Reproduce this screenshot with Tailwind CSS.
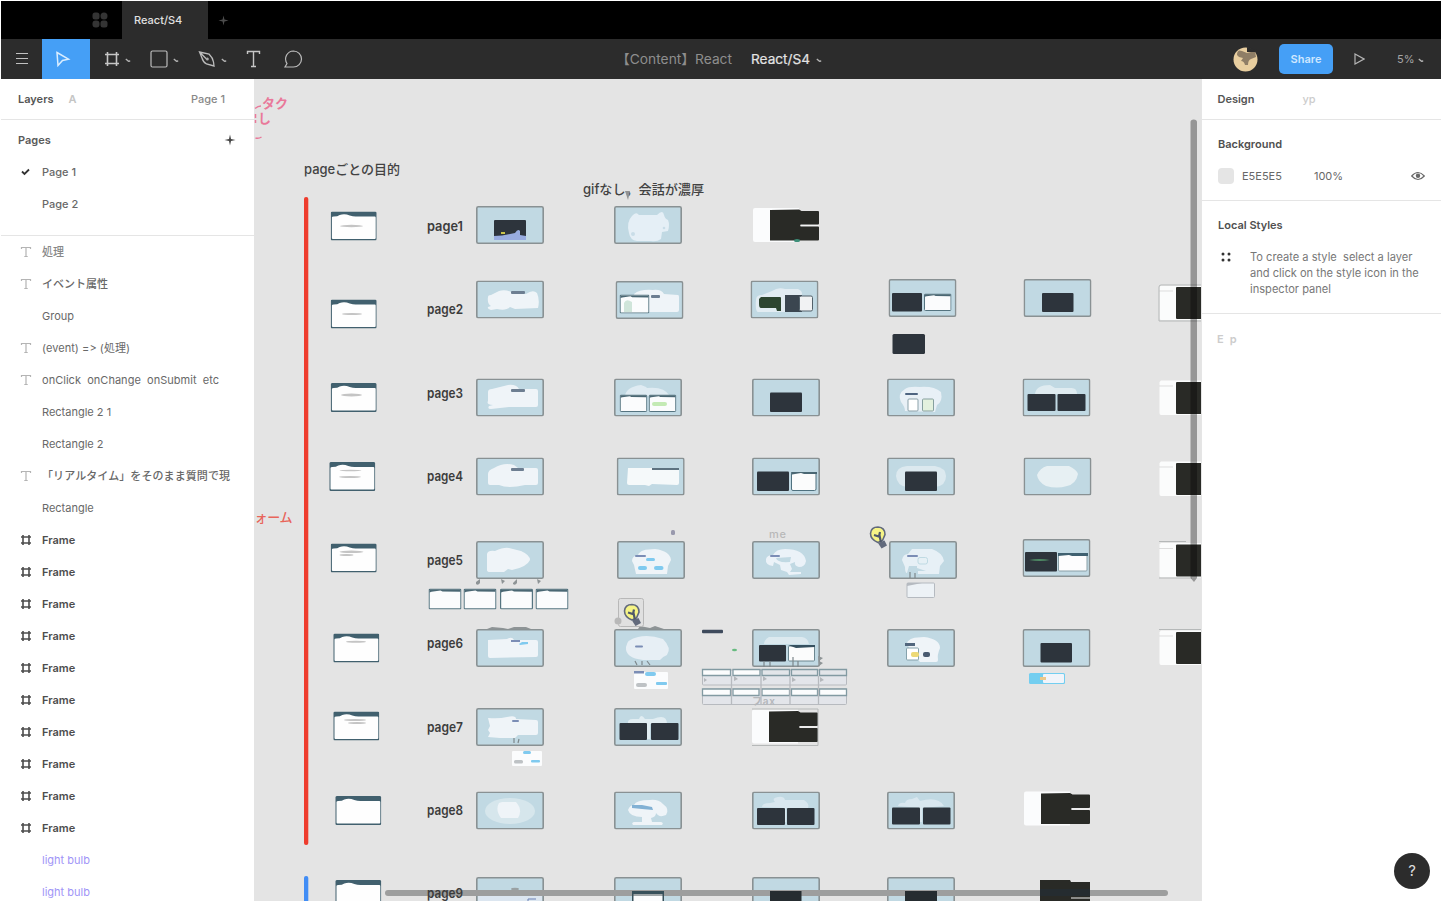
<!DOCTYPE html>
<html lang="ja">
<head>
<meta charset="utf-8">
<title>React/S4</title>
<script src="https://cdn.jsdelivr.net/npm/@tailwindcss/browser@4"></script>
</head>
<body class="h-[901px] w-[1441px] overflow-hidden bg-white pt-px pl-px font-['Inter','Noto_Sans_CJK_JP',sans-serif] text-[11px] text-[#686868] [font-feature-settings:'calt'_0]">
<svg class="hidden">
  <symbol id="hash" viewBox="0 0 12 12"><path d="M3 1v10M9 1v10M1 3h10M1 9h10" fill="none" stroke="currentColor" stroke-width="1.600"/></symbol>
  <symbol id="tee" viewBox="0 0 12 12"><path d="M1.500 3V1.500h9V3M6 1.500v9M4.300 10.500h3.400" fill="none" stroke="#b4b4b4" stroke-width="1.200"/></symbol>
  <symbol id="chev" viewBox="0 0 6 6"><path d="M.8 1 3.500 3.200 5.200 3" fill="none" stroke="#b5b5b5" stroke-width="1.300"/></symbol>
  <symbol id="plus" viewBox="0 0 12 12"><path d="M6 .5 7 5 11.500 6 7 7 6 11.500 5 7 .5 6 5 5Z" fill="currentColor"/></symbol>
  <symbol id="fr" viewBox="0 0 68 38"><rect x=".8" y=".8" width="66.400" height="36.400" rx="1.500" fill="#c1d9e3" stroke="#899193" stroke-width="1.600"/></symbol>
  <symbol id="wf" viewBox="0 0 46 29"><rect width="46" height="29" rx="1.500" fill="#41606e"/><path d="M1.200 6Q1.200 5 3 5 7 5 9 3.500 14 2 19 4 22 5 25 5H44q1 0 1 1V26.500q0 1-1 1H2.200q-1 0-1-1Z" fill="#fefefe"/></symbol>
  <symbol id="mini" viewBox="0 0 33 21"><rect x=".6" y=".6" width="31.800" height="19.800" rx="1" fill="#fbfcfd" stroke="#557480" stroke-width="1.200"/><path d="M1 1H32V3.300L14 3 12 2 3 3.300 1 4Z" fill="#4a6773"/></symbol>
  <symbol id="code" viewBox="0 0 67 36"><path d="M2 1H46V35H2Q0 35 0 33V3Q0 1 2 1Z" fill="#fbfcfd"/><path d="M17 3 46 2.500 48.500 4H65Q66 4 66 5V16.500Q66 17.500 65 17.500H47.500V19.500H65Q66 19.500 66 20.500V32.500Q66 33.500 65 33.500H17Z" fill="#292a26"/><path d="M47.500 18.500H66" stroke="#f4f4f4"/></symbol>
  <symbol id="side" viewBox="0 0 42 36"><path d="M2 .5H42V35H2Q.5 35 .5 33V2Z" fill="#fbfcfc"/><path d="M0 6H14" stroke="#ddd"/><rect x="17" y="2" width="26" height="32" rx="1" fill="#292a26"/></symbol>
  <symbol id="bulb" viewBox="0 0 20 25"><path d="M1.500 8Q2 1.500 9 1.500 16 2 16 9L13.500 15 9 17Q1.500 14 1.500 8Z" fill="#f6f486" stroke="#626a7c" stroke-width="1.600"/><path d="M5 9.500 10 11 11 6.500M10.500 10 12 17" fill="none" stroke="#50596a" stroke-width="2.200"/><path d="M9 17.500 15.500 15 18 20 12.500 23Z" fill="#626a7c"/></symbol>
</svg>
<div class="flex h-[900px] w-[1440px] flex-col">
  <header class="flex h-[38px] shrink-0 bg-black">
    <div class="flex w-[121px] items-center justify-end pr-[14px]">
      <svg class="size-4" viewBox="0 0 16 16" fill="#343434"><rect x=".5" y=".5" width="7" height="7" rx="2.500"/><rect x="8.500" y=".5" width="7" height="7" rx="3.500"/><rect x=".5" y="8.500" width="7" height="7" rx="3"/><rect x="8.500" y="8.500" width="7" height="7" rx="2.500"/></svg>
    </div>
    <div class="flex w-[86px] items-center bg-[#2c2c2c] pl-3 text-[11px] font-medium text-[#e0e0e0]">React/S4</div>
    <div class="flex items-center pl-[10px] text-[#4c4c4c]"><svg class="size-[11px]"><use href="#plus"/></svg></div>
  </header>
  <nav class="flex h-10 shrink-0 items-center bg-[#2c2c2c]">
    <div class="flex w-[41px] justify-center"><svg class="h-3 w-[14px]" viewBox="0 0 14 12"><path d="M1 .500H13M1 5.500H13M1 10.500H13" stroke="#c0c0c0"/></svg></div>
    <div class="flex h-10 w-12 items-center bg-[#459ff6] pl-[13px]"><svg class="h-4 w-4" viewBox="0 0 16 16"><path d="M2 1.500 13.500 8.200 7.500 9.500 3 14.500Z" fill="none" stroke="#d9edff" stroke-width="1.500"/></svg></div>
    <div class="flex w-12 items-center gap-1 pl-[14px]"><svg class="size-4" viewBox="0 0 16 16"><path d="M3.500 1v14M12.500 1v14M1 3.500h14M1 12.500h14" fill="none" stroke="#c6c6c6" stroke-width="1.600"/></svg><svg class="mt-[3px] ml-px size-[6px]"><use href="#chev"/></svg></div>
    <div class="flex w-12 items-center gap-1 pl-3"><svg class="h-[18px] w-[18px]" viewBox="0 0 18 18"><rect x="1" y="1" width="16" height="16" rx="1.500" fill="none" stroke="#bcbcbc" stroke-width="1.200"/></svg><svg class="mt-[3px] ml-px size-[6px]"><use href="#chev"/></svg></div>
    <div class="flex w-12 items-center gap-1 pl-3"><svg class="h-[18px] w-[18px]" viewBox="0 0 18 18"><path d="M1.500 2 11 4 Q15 8 15.500 12L16 16 8.500 14Q5 12 4 8ZM1.500 2 8.500 9" fill="none" stroke="#bcbcbc" stroke-width="1.300"/><circle cx="9.300" cy="9" r="1.500" fill="#aaa"/></svg><svg class="mt-[3px] ml-px size-[6px]"><use href="#chev"/></svg></div>
    <div class="flex w-10 pl-3"><svg class="h-[18px] w-[15px]" viewBox="0 0 15 18"><path d="M1.500 4V1.500H13.500V4M7.500 1.500V16.500M5 16.500H10" fill="none" stroke="#c6c6c6" stroke-width="1.400"/></svg></div>
    <div class="flex w-10 pl-[9px]"><svg class="h-[18px] w-5" viewBox="0 0 20 18"><path d="M10.500 1A8 8 0 1 1 10.500 17H2L4 13.500A8 8 0 0 1 10.500 1Z" fill="none" stroke="#bcbcbc" stroke-width="1.200"/></svg></div>
    <div class="flex flex-1 items-center pl-[301px] text-[13px] whitespace-nowrap"><svg class="h-[14px] w-[122px] overflow-visible" viewBox="0 0 122 14"><text x="1" y="12" textLength="116" lengthAdjust="spacingAndGlyphs" fill="#8e8e8e">【Content】React</text></svg><svg class="ml-[14px] h-[14px] w-[65px] overflow-visible" viewBox="0 0 65 14"><text x="0" y="12" textLength="59" lengthAdjust="spacingAndGlyphs" fill="#e3e3e3" stroke="#e3e3e3" stroke-width=".2">React/S4</text></svg><svg class="mt-[3px] size-[6px]"><use href="#chev"/></svg></div>
    <div class="flex w-[208px] items-center">
      <svg class="size-[25px] shrink-0" viewBox="0 0 25 25"><circle cx="12.500" cy="12.500" r="12" fill="#e8ce9f"/><path d="M4 8Q4 2 9 4L14 6 22 4 23 10 18 12Q15 13 15 18H12Q11 14 8 14L10 11 6 10Z" fill="#8f7e66"/><path d="M14 0 24 3 22 5 14 5Z" fill="#2c2c2c"/></svg>
      <div class="ml-[21px] flex h-[30px] w-[54px] items-center justify-center rounded-[5px] bg-[#459ff6] font-semibold text-[#cfe7ff]">Share</div>
      <svg class="ml-[21px] h-3 w-[11px]" viewBox="0 0 11 12"><path d="M1 1 10 6 1 11Z" fill="none" stroke="#b5b5b5" stroke-width="1.200"/></svg>
      <span class="ml-8 text-[#a5a5a5]">5%</span><svg class="mt-[3px] ml-[3px] size-[6px]"><use href="#chev"/></svg>
    </div>
  </nav>
  <div class="flex h-[822px] shrink-0">
    <aside class="flex w-[253px] shrink-0 flex-col overflow-hidden bg-white">
      <div class="flex h-[41px] shrink-0 items-center border-b border-[#e5e5e5] pl-[17px]"><span class="font-semibold text-[#555]">Layers</span><span class="ml-[15px] font-semibold text-[#c5c5c5]">A</span><span class="ml-auto pr-[29px] font-medium text-[#888]">Page 1</span></div>
      <div class="h-[116px] shrink-0 border-b border-[#e5e5e5]">
        <div class="flex h-9 items-center pt-1 pl-[17px] font-semibold text-[#5a5a5a]">Pages<svg class="mr-[18px] ml-auto size-3 text-[#444]"><use href="#plus"/></svg></div>
        <div class="flex h-8 items-center pl-5 font-medium"><svg class="mr-3 h-2 w-[9px]" viewBox="0 0 9 8"><path d="M1 3.500 3.500 6 8 1.500" fill="none" stroke="#333" stroke-width="1.800"/></svg>Page 1</div>
        <div class="flex h-8 items-center pl-[41px] font-medium">Page 2</div>
      </div>
      <div class="flex flex-col whitespace-nowrap *:flex *:h-8 *:shrink-0 *:items-center *:gap-[10px] *:pl-[19px]">
        <div class="font-medium text-[#888]"><svg class="size-3"><use href="#tee"/></svg>処理</div>
        <div class="font-medium"><svg class="size-3"><use href="#tee"/></svg>イベント属性</div>
        <div><i class="w-3"></i>Group</div>
        <div><svg class="size-3 shrink-0"><use href="#tee"/></svg><svg class="h-4 w-[90px] shrink-0" viewBox="0 0 90 16"><text y="12" textLength="88" lengthAdjust="spacing" fill="currentColor">(event) =&gt; (処理)</text></svg></div>
        <div><svg class="size-3"><use href="#tee"/></svg><svg class="h-4 w-[180px] shrink-0" viewBox="0 0 180 16"><text y="12" textLength="177" lengthAdjust="spacing" fill="currentColor">onClick&#160; onChange&#160; onSubmit&#160; etc</text></svg></div>
        <div><i class="w-3"></i>Rectangle 2 1</div>
        <div><i class="w-3"></i>Rectangle 2</div>
        <div><svg class="size-3"><use href="#tee"/></svg><svg class="h-4 w-[190px] shrink-0" viewBox="0 0 190 16"><text y="12" textLength="188" lengthAdjust="spacing" font-weight="500" fill="currentColor">「リアルタイム」をそのまま質問で現</text></svg></div>
        <div><i class="w-3"></i>Rectangle</div>
        <div class="font-semibold text-[#4d4d4d]"><svg class="size-3"><use href="#hash"/></svg>Frame</div>
        <div class="font-semibold text-[#4d4d4d]"><svg class="size-3"><use href="#hash"/></svg>Frame</div>
        <div class="font-semibold text-[#4d4d4d]"><svg class="size-3"><use href="#hash"/></svg>Frame</div>
        <div class="font-semibold text-[#4d4d4d]"><svg class="size-3"><use href="#hash"/></svg>Frame</div>
        <div class="font-semibold text-[#4d4d4d]"><svg class="size-3"><use href="#hash"/></svg>Frame</div>
        <div class="font-semibold text-[#4d4d4d]"><svg class="size-3"><use href="#hash"/></svg>Frame</div>
        <div class="font-semibold text-[#4d4d4d]"><svg class="size-3"><use href="#hash"/></svg>Frame</div>
        <div class="font-semibold text-[#4d4d4d]"><svg class="size-3"><use href="#hash"/></svg>Frame</div>
        <div class="font-semibold text-[#4d4d4d]"><svg class="size-3"><use href="#hash"/></svg>Frame</div>
        <div class="font-semibold text-[#4d4d4d]"><svg class="size-3"><use href="#hash"/></svg>Frame</div>
        <div class="text-[#9f95f7]"><i class="w-3"></i>light bulb</div>
        <div class="text-[#9f95f7]"><i class="w-3"></i>light bulb</div>
      </div>
    </aside>
    <main class="h-[822px] w-[947px] shrink-0 bg-[#e4e4e4]">
      <svg class="block h-[822px] w-[947px]" viewBox="254 79 947 822">
        <!-- section titles -->
        <g fill="#e9799a" font-size="13" font-weight="600"><text x="262" y="108" textLength="26" lengthAdjust="spacingAndGlyphs">タク</text><text x="258" y="123">し</text><path d="M255 108.500Q258 106 261 106" fill="none" stroke="#e9799a" stroke-width="1.500"/><path d="M255.500 114v4M255.500 120v3" stroke="#e9799a" stroke-width="1.500"/><path d="M255.500 138q3 1 6-1" fill="none" stroke="#e9799a" stroke-width="1.500"/></g>
        <text x="254.500" y="522" font-size="13" font-weight="500" textLength="38" fill="#e8655b">ォーム</text>
        <g fill="#424242" font-size="13" font-weight="500"><text x="304" y="174" textLength="96" lengthAdjust="spacingAndGlyphs">pageごとの目的</text><text x="583" y="194" textLength="121" lengthAdjust="spacingAndGlyphs">gifなし，会話が濃厚</text></g>
        <path d="M625 191h5l-2 9Z" fill="#929292"/>
        <rect x="304" y="197" width="4.300" height="648" rx="2" fill="#ee3c2d"/>
        <rect x="304" y="876" width="4.300" height="40" rx="2" fill="#418df5"/>
        <!-- purpose cards -->
        <g><use href="#wf" x="330.700" y="211.500" width="46" height="29"/><use href="#wf" x="330.700" y="299.500" width="46" height="29"/><use href="#wf" x="330.700" y="383" width="46" height="29"/><use href="#wf" x="329.300" y="462" width="46" height="29"/><use href="#wf" x="330.700" y="543.500" width="46" height="29"/><use href="#wf" x="333.300" y="633.500" width="46" height="29"/><use href="#wf" x="333.300" y="711.500" width="46" height="29"/><use href="#wf" x="335.300" y="796" width="46" height="29"/><use href="#wf" x="335.300" y="880" width="46" height="29"/></g>
        <g fill="#c4c4c4"><ellipse cx="351.500" cy="226" rx="11.500" ry="1.200"/><ellipse cx="352" cy="314" rx="10" ry="1"/><ellipse cx="351.500" cy="395" rx="10.500" ry="1.500"/><ellipse cx="350.500" cy="470.500" rx="11" ry=".8"/><ellipse cx="350" cy="477" rx="11" ry=".9"/><ellipse cx="351.500" cy="551.800" rx="12" ry="1.200"/><ellipse cx="346.500" cy="555" rx="7" ry="1.100"/><ellipse cx="356" cy="641.700" rx="10" ry="1"/><ellipse cx="355" cy="720" rx="11" ry="1"/><ellipse cx="357" cy="723" rx="9" ry="1"/></g>
        <!-- slide frames -->
        <g>
          <use href="#fr" x="476" y="206" width="68" height="38"/><use href="#fr" x="614" y="206" width="68" height="38"/>
          <use href="#fr" x="476" y="280.500" width="68" height="38"/><use href="#fr" x="615.500" y="281" width="68" height="38"/><use href="#fr" x="750.500" y="280.500" width="68" height="38"/><use href="#fr" x="888.500" y="279" width="68" height="38"/><use href="#fr" x="1023.500" y="279" width="68" height="38"/>
          <use href="#fr" x="476" y="378.500" width="68" height="38"/><use href="#fr" x="614" y="378.500" width="68" height="38"/><use href="#fr" x="752" y="378.500" width="68" height="38"/><use href="#fr" x="887" y="378.500" width="68" height="38"/><use href="#fr" x="1022.500" y="378.500" width="68" height="38"/>
          <use href="#fr" x="476" y="457.500" width="68" height="38"/><use href="#fr" x="616.700" y="457.500" width="68" height="38"/><use href="#fr" x="752" y="457.500" width="68" height="38"/><use href="#fr" x="887" y="457.500" width="68" height="38"/><use href="#fr" x="1023.500" y="457.500" width="68" height="38"/>
          <use href="#fr" x="476" y="541" width="68" height="38"/><use href="#fr" x="617" y="541" width="68" height="38"/><use href="#fr" x="752" y="541" width="68" height="38"/><use href="#fr" x="889" y="541" width="68" height="38"/><use href="#fr" x="1022.500" y="539" width="68" height="38"/>
          <use href="#fr" x="476" y="629" width="68" height="38"/><use href="#fr" x="614" y="629" width="68" height="38"/><use href="#fr" x="752" y="629" width="68" height="38"/><use href="#fr" x="887" y="629" width="68" height="38"/><use href="#fr" x="1022.500" y="629" width="68" height="38"/>
          <use href="#fr" x="476" y="708" width="68" height="38"/><use href="#fr" x="614" y="708" width="68" height="38"/>
          <use href="#fr" x="476" y="791.500" width="68" height="38"/><use href="#fr" x="614" y="791.500" width="68" height="38"/><use href="#fr" x="752" y="791.500" width="68" height="38"/><use href="#fr" x="887" y="791.500" width="68" height="38"/>
          <use href="#fr" x="476" y="877" width="68" height="38"/><use href="#fr" x="614" y="877" width="68" height="38"/><use href="#fr" x="752" y="877" width="68" height="38"/><use href="#fr" x="887" y="877" width="68" height="38"/>
        </g>
        <!-- dark and pale code shots -->
        <g><use href="#code" x="753" y="207" width="67" height="36"/><use href="#code" x="752" y="708.500" width="67" height="36"/><use href="#code" x="1024" y="790.500" width="67" height="36"/><use href="#side" x="1159" y="285" width="42" height="36"/><use href="#side" x="1159" y="380" width="42" height="36"/><use href="#side" x="1159" y="461" width="42" height="36"/><use href="#side" x="1159" y="542.500" width="42" height="36"/><use href="#side" x="1159" y="630" width="42" height="36"/></g>
        <path d="M752 745.500H818V709H752M1159 541.500H1186M1159 578H1192M1159 629.500H1201M1159 321V287q0-2 2-2H1201M1159 321H1201" fill="none" stroke="#b5b8b8"/>
        <path d="M1040 880H1070L1071 882H1090V901H1040Z" fill="#292a26"/><path d="M1071 898H1090" stroke="#eee"/>
        <ellipse cx="797" cy="240.500" rx="3" ry="1.500" fill="#3e8f79"/>
        <!-- pale illustration blobs -->
        <g fill="#eff4f8">
          <path d="M632 216Q636 211 639 215H657Q663 209 664 215 665 219 668 220 670 225 668 231L662 232 661 239Q657 242 651 241H637Q630 240 629 233 626 222 632 216Z" fill="#e5eff6"/><circle cx="633" cy="234" r="2" fill="#c9dde8"/><circle cx="664" cy="228" r="1.300" fill="#c9dde8"/>
          <path d="M488 297Q488 295 491 295L499 291Q505 289 511 292L526 294Q533 289 537 293 540 300 538 308L515 309 510 307Q506 311 497 309L491 310Q487 309 488 307L491 306Q487 304 488 297Z"/>
          <path d="M634 294Q640 289 653 290 661 289 664 294L678 295Q679 295 679 297V310Q679 312 677 312H640Z"/>
          <path d="M756 300Q756 295 762 295L772 291Q778 287 785 289L798 289Q804 292 801 296L790 312H758Q755 311 756 300Z" fill="#e2ecf2"/>
          <path d="M488 392Q488 389 492 389L508 385Q516 384 519 389H536Q538 389 538 391V405Q538 407 536 407L509 407 491 409Q487 409 489 406L493 405Q486 405 488 401Z"/>
          <path d="M625 396Q626 387 641 385 647 387 647 388 664 386 670 396Z" fill="#dfebf2"/>
          <path d="M905 411Q905 407 901 402 897 394 905 389 909 386 920 387 934 386 941 392 943 402 937 405L935 412Z" fill="#e8f0f6"/>
          <path d="M1035 394Q1036 385 1050 385L1055 388H1070Q1077 387 1077 394Z" fill="#dfebf0"/>
          <path d="M488 474Q488 470 494 468 504 462 514 465L518 468H536Q538 468 538 470V483Q538 485 536 485H525Q508 489 499 485H490Q488 485 488 483Z"/>
          <path d="M628 468H650L652 468 679 469V483Q679 485 677 485L652 484 649 486 645 485H629Q627 485 627 483Z" fill="#f5f9fa"/>
          <path d="M896 476Q896 467 907 466H935Q946 468 946 476 946 486 935 487H907Q897 486 896 476Z" fill="#dce9ef"/>
          <path d="M1037 475Q1040 468 1047 466H1069Q1077 470 1078 474 1076 484 1067 486 1057 489 1046 486 1038 482 1037 475Z" fill="#e7f0f3"/>
          <path d="M487 554Q488 550 495 551 504 547 509 548L521 551Q530 555 530 560 527 567 512 570L508 569 504 572H490Q487 572 487 570Z"/>
          <path d="M632 561Q632 556 638 555 640 549 655 549 670 551 671 560L668 566 667 574H636L634 565Z"/>
          <path d="M766 559Q767 555 773 555 776 549 785 549 804 549 806 561 805 567 799 567 794 566 795 562L790 564 792 569 790 572H801V574L789 575 787 572 781 570 780 565 774 562 773 566Q765 565 766 559ZM776 558Q777 563 790 562L791 557Z" fill-rule="evenodd" fill="#ebf2f8"/>
          <path d="M902 560Q903 554 908 554L912 549H932Q943 553 944 561L940 566 939 574H918V571L926 571 917 568V566H909L907 573Q905 573 905 567Z" fill="#e7f0f6"/>
          <path d="M488 640 507 639Q512 636 514 640L536 640Q538 640 538 642V655Q538 657 536 657L490 658Q488 658 488 656Z"/>
          <path d="M626 647Q627 639 638 637 649 634 663 639 672 648 667 655 662 657 660 660H643Q625 658 626 647Z" fill="#e7eff5"/>
          <path d="M764 644Q764 640 769 637H802Q808 638 809 644Z" fill="#dce9ef"/>
          <path d="M907 643Q909 637 924 637 940 639 940 648 937 655 938 660Q938 662 936 662H920L909 648Z"/>
          <path d="M488 718Q499 719 507 717 516 715 516 719L536 720Q538 720 538 722V733Q538 735 536 735L518 735 515 738H500L488 737 490 733 488 730 490 726Z"/>
          <path d="M628 724Q627 719 633 719H639Q641 713 645 719H653Q667 713 667 724H650V739H646V724Z" fill="#e1edf2"/>
          <ellipse cx="510" cy="811" rx="25" ry="13" fill="#d6e6ec"/><path d="M502 802H516Q523 810 518 818H501Q495 810 499 803Z"/>
          <path d="M628 810Q630 805 634 805 636 800 650 800 658 799 663 804 670 809 666 815 659 818 656 813 656 817 651 818L652 822H661Q664 823 662 825L633 825Q631 823 634 822L642 822 642 817Q630 817 628 810Z"/>
          <path d="M762 807Q762 803 770 803L775 802Q771 798 778 797 784 796 785 800 796 800 804 800 810 804 808 808H786V822H784V808Z" fill="#d9e7ef"/>
          <path d="M898 806Q899 802 905 803 906 799 912 799L917 797 920 801Q938 796 944 806L922 808V822H920V808Z" fill="#d9e7ef"/>
        </g>
        <rect x="478" y="891" width="64" height="10" fill="#dce6f0"/><path d="M528 903V899H536" fill="none" stroke="#6b80b4"/><ellipse cx="515" cy="889" rx="4" ry="1.200" fill="#9aa1a3"/>
        <!-- dark editors -->
        <g fill="#2d343c">
          <rect x="494" y="220" width="32" height="20" rx="1"/>
          <rect x="892" y="293" width="30" height="18.500" rx="1"/><rect x="892.500" y="334" width="32.500" height="20" rx="1.500"/><rect x="1042" y="293" width="31.500" height="19" rx="1"/>
          <rect x="770" y="392.500" width="32" height="19.500" rx="1"/><rect x="1027.500" y="394" width="28" height="17" rx="1"/><rect x="1057.500" y="394" width="28" height="17" rx="1"/>
          <rect x="757" y="471.500" width="32" height="19.500" rx="1"/><rect x="905" y="471.500" width="32" height="19.500" rx="1"/>
          <rect x="1025" y="552" width="32" height="19.500" rx="1"/>
          <rect x="759" y="645" width="27" height="16.500" rx="1"/><rect x="1040.500" y="643" width="31.500" height="19.500" rx="1"/>
          <rect x="619.500" y="723" width="27.500" height="17" rx="1"/><rect x="651" y="723" width="27.500" height="17" rx="1"/>
          <rect x="757" y="808" width="28" height="17" rx="1"/><rect x="787" y="808" width="27.500" height="17" rx="1"/><rect x="892" y="807.500" width="28" height="17" rx="1"/><rect x="923" y="807.500" width="27.500" height="17" rx="1"/>
          <rect x="785" y="295" width="17" height="17" fill="#3b4650"/>
          <path d="M761 297H780Q781 297 781 298V306L781 311H777L776 308 761 308Q759 308 759 304V299Z" fill="#2d4530"/>
        </g>
        <path d="M494 236Q502 236 510 234L515 233Q518 228 520 231V235L526 236V240H494Z" fill="#98ace0"/><rect x="501" y="232" width="4" height="2" fill="#c9c44a"/>
        <rect x="799.500" y="296" width="13" height="15" rx="1.500" fill="#f1f2f3" stroke="#53616a"/>
        <path d="M1029 560Q1039 558 1050 560 1040 562 1029 560Z" fill="#4f8a65"/>
        <!-- small cards -->
        <g>
          <use href="#mini" x="619.500" y="294.500" width="30" height="19"/><path d="M624 312V303Q626 298 632 302V312Z" fill="#d0e5da"/>
          <use href="#mini" x="924" y="293.500" width="27.500" height="17.500"/><use href="#mini" x="619.500" y="394.500" width="28" height="17.500"/><use href="#mini" x="648.500" y="394.500" width="28" height="17.500"/><rect x="652" y="402" width="15" height="4" rx="2" fill="#c3eab4"/>
          <rect x="791.500" y="472.500" width="24.500" height="18" rx="1.500" fill="#fbfcfc" stroke="#4f717f"/><path d="M791 472H817V474L804 474 801 473 792 474.500Z" fill="#4a6773"/>
          <rect x="1058.500" y="554" width="28.500" height="17" rx="1" fill="#fdfdfe" stroke="#8aa0a8"/><path d="M1058 553H1088V556H1072L1069 555 1058 556Z" fill="#3f6070"/>
          <rect x="788.500" y="646" width="26" height="15" rx="1" fill="#fbfcfc" stroke="#6c8790"/><path d="M788 645H815V647L796 648Z" fill="#35505f"/>
          <use href="#mini" x="428.500" y="588.500" width="33" height="21"/><use href="#mini" x="463.500" y="588.500" width="33" height="21"/><use href="#mini" x="500" y="588.500" width="33" height="21"/><use href="#mini" x="535.500" y="588.500" width="33" height="21"/>
          <rect x="908" y="399" width="10" height="12" rx="1" fill="#fff" stroke="#8ba1a9"/><rect x="922.500" y="399" width="11" height="12" rx="1" fill="#e3f1de" stroke="#86a09f"/>
          <rect x="907" y="583" width="27.500" height="14.500" rx="1" fill="#edf2f6" stroke="#b5bac0"/><path d="M907 583H922L907 586Z" fill="#b5bac0"/>
          <rect x="906.500" y="648" width="12" height="12" rx="1" fill="#fff" stroke="#86a2ac"/><rect x="911" y="652" width="8" height="5" rx="2" fill="#edd975"/><rect x="923" y="652" width="7" height="5" rx="2" fill="#495a70"/>
          <rect x="634" y="672" width="34" height="17" rx="1" fill="#fbfcfd"/><rect x="512" y="751" width="30" height="15" rx="1" fill="#fbfcfd"/>
          <rect x="918" y="557.500" width="9.500" height="6.500" rx="2" fill="#e6f0f5" stroke="#bfdae3"/>
        </g>
        <!-- heading strokes and buttons -->
        <g fill="#6d7e91"><rect x="511" y="291" width="14" height="3" rx="1"/><rect x="651" y="295" width="9" height="3" rx="1"/><rect x="511" y="389" width="14" height="3" rx="1"/><rect x="905" y="393" width="13" height="2" rx="1" fill="#4e6480"/><rect x="511" y="468" width="13" height="3" rx="1"/><rect x="652" y="468" width="27" height="2" fill="#5d7280"/></g>
        <g fill="#7b8db5"><rect x="635" y="555" width="11" height="2" rx="1"/><rect x="770" y="555" width="10" height="2" rx="1"/><rect x="907" y="555" width="11" height="2" rx="1"/><rect x="511" y="640" width="9" height="2"/><rect x="635" y="645.500" width="8" height="2" rx="1"/><rect x="905" y="643" width="10" height="3" fill="#52667d"/><rect x="512" y="720" width="7" height="2" rx="1"/><rect x="634" y="671" width="10" height="2.500"/><path d="M632 805 642 805 652 807 653 810 642 809 632 808Z" fill="#82b1d4"/><rect x="671" y="530" width="4" height="5" rx="1.500" fill="#9999ad"/></g>
        <g fill="#80caef"><rect x="646" y="558" width="9" height="3" rx="1.500"/><rect x="638" y="566" width="9" height="4" rx="2"/><rect x="654" y="566" width="9.500" height="4" rx="2"/><path d="M519 644 522 642H528V644L520 645Z"/><rect x="645" y="672" width="11" height="4" rx="2"/><rect x="656" y="682" width="11" height="3" rx="1"/><rect x="523" y="751" width="8" height="3" rx="1.500"/><rect x="531" y="760" width="9" height="2.500" rx="1"/></g>
        <g fill="#bec2c5"><rect x="636" y="683" width="11" height="4" rx="2"/><rect x="514" y="760" width="9" height="3.500" rx="1.500"/></g>
        <rect x="1029" y="673" width="36" height="11" rx="1.500" fill="#73cef0"/><rect x="1043" y="674" width="21" height="9" rx="1" fill="#f1f4fa"/><rect x="1040" y="677" width="6" height="3" fill="#ecc889"/>
        <rect x="702" y="629.700" width="21" height="3.500" rx="1" fill="#3e4a5c"/><ellipse cx="734.500" cy="650" rx="2.500" ry="1.300" fill="#67bb80"/>
        <!-- card strip grid -->
        <g fill="#e3e5ea" stroke="#b7babf"><rect x="702.500" y="670" width="144" height="15" rx="1"/><rect x="702.500" y="689" width="144" height="15.500" rx="1"/></g>
        <g fill="#fbfcfd" stroke="#829aa2" stroke-width="1.300"><path d="M702.500 669.500H730.500V675.500H702.500ZM733 669.500H760V675.500H733ZM702.500 689H730.500V695.500H702.500ZM733 689H759V695.500H733ZM762 689H789.500V695.500H762ZM791.500 689H817.500V695.500H791.500ZM819.500 689H846.500V695.500H819.500Z"/><path d="M762 669.500H789.500V675.500H762ZM791.500 669.500H817.500V675.500H791.500ZM819.500 669.500H846.500V675.500H819.500Z" fill="#e2e5e9"/></g>
        <path d="M731.500 676V704M761 676V704M790 676V704M818.500 676V704" stroke="#b7babf" stroke-width="1.300"/>
        <g fill="#b4b7bb"><path d="M704 678 707 680 704 682ZM734 676 738 679 734 681ZM763 676 767 679 763 681ZM792 677 796 680 792 682ZM820 677 824 680 820 682Z"/></g>
        <text x="752" y="705" font-size="10" font-weight="600" fill="#b4b7bb" textLength="23">フax</text>
        <text x="769" y="538" font-size="11" font-weight="500" fill="#b8b8b8" textLength="17">me</text>
        <!-- arrows and notes -->
        <g fill="#8e9496"><path d="M476 582 480 579V583Q478 586 476 584ZM501 579 505 581 502 584ZM513 583 517 579V583Q515 586 513 584ZM537 579 541 581 538 584ZM487 629 492 627 503 628 508 629 514 627 526 627 531 629ZM638 629 640 626 650 628 655 626 664 629ZM818 656 823 658 819 661 823 663 819 666Z"/></g>
        <path d="M635 661 637 665M642 661V665M647 661 650 665M764 661V667M770 661V667M793 657V667M798 661V667M514 738V743M519 739 518 743M910 572V578M915 573V578" stroke="#7d878b" stroke-width="1.200"/>
        <rect x="618.500" y="598.500" width="25" height="28" rx="2" fill="#e0e0e0" stroke="#b8b8b8"/><circle cx="618" cy="621" r="3.500" fill="#b8b8b8"/>
        <use href="#bulb" x="623" y="603" width="20" height="25"/><use href="#bulb" x="869" y="525.500" width="20" height="25"/>
        <!-- scrollbars -->
        <path d="M1190.500 122Q1190.500 119.500 1193.700 119.500T1197 122V578L1194 582 1190.500 578Z" fill="#000" fill-opacity=".34"/>
        <rect x="385" y="890" width="783" height="6" rx="3" fill="#9d9e9e"/>
        <!-- content darkened below the horizontal scrollbar -->
        <path d="M770 891H801.500V901H770ZM905 891H937V901H905ZM1040 889H1090V896H1040Z" fill="#252c30"/>
        <path d="M632 901V891H664V901" fill="#38505a"/><rect x="633.500" y="894" width="29" height="2" fill="#9fa5a7"/><rect x="633.500" y="896" width="29" height="5" fill="#fbfcfd"/>
        <!-- row labels -->
        <g fill="#3c3c3c" font-size="13.500" font-weight="600">
          <text x="427" y="231" textLength="36" lengthAdjust="spacingAndGlyphs">page1</text><text x="427" y="314" textLength="36" lengthAdjust="spacingAndGlyphs">page2</text><text x="427" y="398" textLength="36" lengthAdjust="spacingAndGlyphs">page3</text><text x="427" y="481" textLength="36" lengthAdjust="spacingAndGlyphs">page4</text><text x="427" y="565" textLength="36" lengthAdjust="spacingAndGlyphs">page5</text><text x="427" y="648" textLength="36" lengthAdjust="spacingAndGlyphs">page6</text><text x="427" y="732" textLength="36" lengthAdjust="spacingAndGlyphs">page7</text><text x="427" y="815" textLength="36" lengthAdjust="spacingAndGlyphs">page8</text><text x="427" y="898" textLength="36" lengthAdjust="spacingAndGlyphs">page9</text>
        </g>
      </svg>
    </main>
    <aside class="relative flex w-[240px] shrink-0 flex-col border-l border-[#e5e5e5] bg-white">
      <div class="flex h-[41px] shrink-0 items-center border-b border-[#e5e5e5] pl-[15.500px]"><span class="font-semibold text-[#555]">Design</span><span class="ml-12 font-medium text-[#ccc]">yp</span></div>
      <div class="h-[81px] shrink-0 border-b border-[#e5e5e5] px-4 pt-4">
        <div class="flex h-4 items-center font-semibold text-[#505050]">Background</div>
        <div class="mt-4 flex h-4 items-center"><i class="size-4 rounded-sm bg-[#e5e5e5]"></i><span class="ml-2">E5E5E5</span><span class="ml-8">100%</span>
          <svg class="ml-auto h-[10px] w-[14px]" viewBox="0 0 14 10"><path d="M.7 5Q7-2 13.300 5 7 12 .7 5Z" fill="none" stroke="#686868" stroke-width="1.200"/><circle cx="7" cy="4.800" r="2.200" fill="#686868"/></svg></div>
      </div>
      <div class="h-[113px] shrink-0 border-b border-[#e5e5e5] px-4 pt-4">
        <div class="flex h-4 items-center font-semibold text-[#505050]">Local Styles</div>
        <div class="mt-4 flex gap-[19px] pl-[3px]"><svg class="mt-[3px] h-[10px] w-[10px] shrink-0" viewBox="0 0 10 10" fill="#333"><circle cx="2" cy="2" r="1.500"/><circle cx="8" cy="2" r="1.500"/><circle cx="2" cy="8" r="1.500"/><circle cx="8" cy="8" r="1.500"/></svg><p class="text-[11.100px] leading-4 whitespace-nowrap text-[#777]">To create a style&nbsp; select a layer<br>and click on the style icon in the<br>inspector panel</p></div>
      </div>
      <div class="flex h-[50px] items-center gap-[6px] pl-[15px] font-semibold text-[#ccc]"><span>E</span><span>p</span></div>
      <div class="absolute right-[11px] bottom-3 flex size-9 items-center justify-center rounded-full bg-[#2c2c2c] text-[15px] text-[#ddd]">?</div>
    </aside>
  </div>
</div>
</body>
</html>
